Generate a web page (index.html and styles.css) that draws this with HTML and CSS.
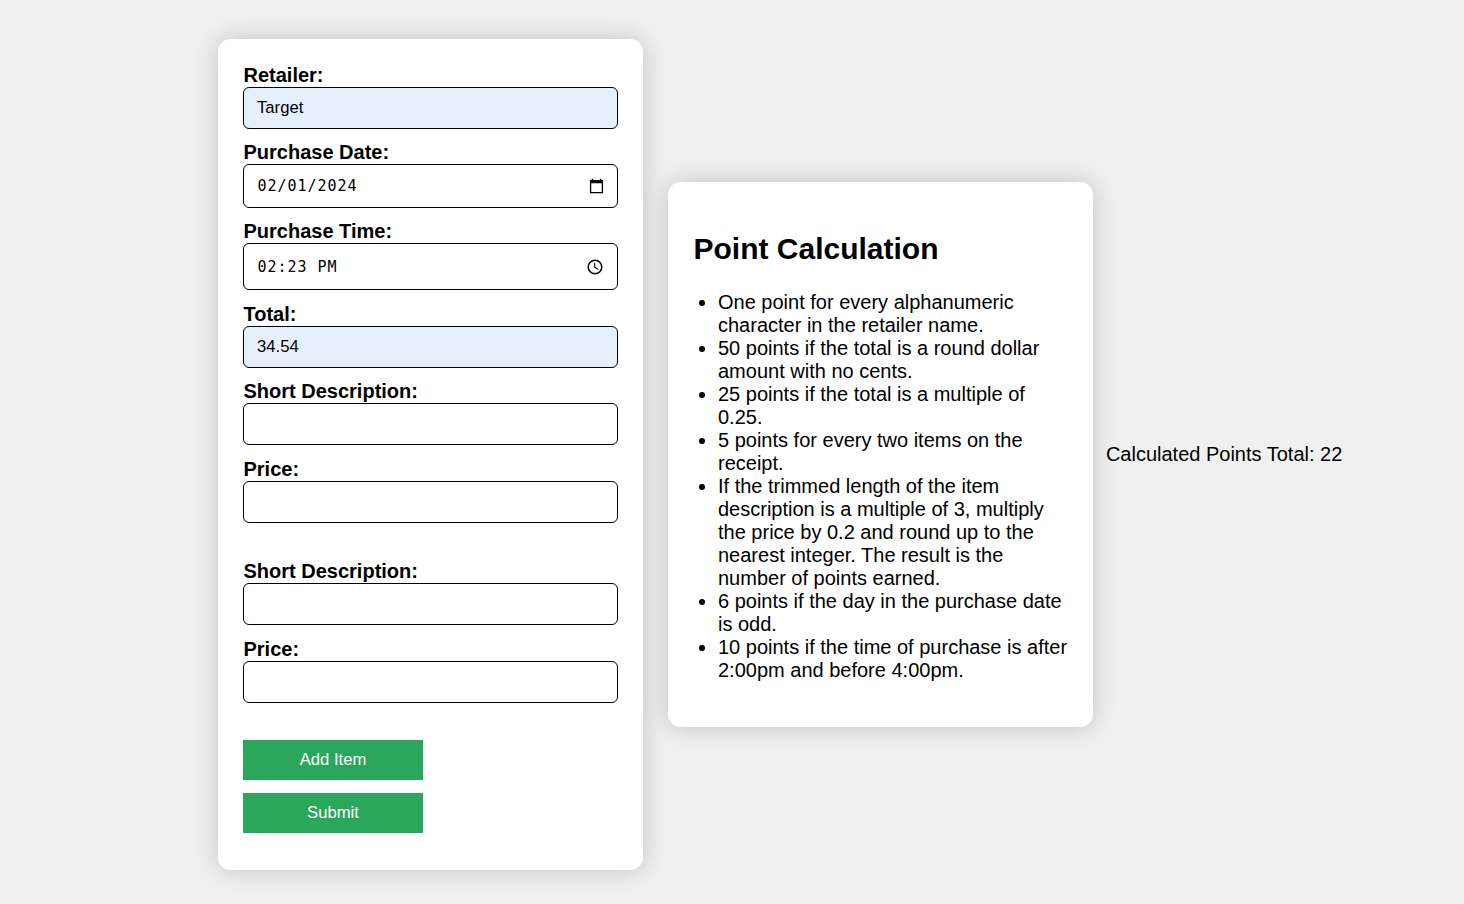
FILE: index.html
```html
<!DOCTYPE html>
<html lang="en">
<head>
<meta charset="utf-8">
<title>Receipt Points</title>
<link rel="stylesheet" href="styles.css">
</head>
<body>
<main class="page">
  <form class="card receipt">
    <label class="field">Retailer:<input class="control filled" type="text" value="Target"></label>
    <label class="field">Purchase Date:
      <span class="control picker date"><span>02/01/2024</span>
        <svg width="17" height="17" viewBox="0 0 17 17"><path d="M2.6 3.2h11.8v11.4H2.6z" fill="none" stroke="#000" stroke-width="1.3"/><path d="M2 2h13v3.3H2zM3.7.7h1.4v2H3.7zM11.9.7h1.4v2h-1.4z"/></svg>
      </span>
    </label>
    <label class="field roomy">Purchase Time:
      <span class="control picker time"><span>02:23 PM</span>
        <svg width="17" height="17" viewBox="0 0 17 17"><circle cx="9" cy="9" r="6.8" fill="none" stroke="#000" stroke-width="1.5"/><path d="M8.7 5v4.3l3.9 2.3" fill="none" stroke="#000" stroke-width="1.1"/></svg>
      </span>
    </label>
    <label class="field">Total:<input class="control filled" type="text" value="34.54"></label>
    <div class="item">
      <label class="field roomy">Short Description:<input class="control" type="text"></label>
      <label class="field last">Price:<input class="control" type="text"></label>
    </div>
    <div class="item">
      <label class="field roomy">Short Description:<input class="control" type="text"></label>
      <label class="field last">Price:<input class="control" type="text"></label>
    </div>
    <button class="action" type="button">Add Item</button>
    <button class="action" type="button">Submit</button>
  </form>
  <section class="card rules">
    <h2>Point Calculation</h2>
    <ul>
      <li>One point for every alphanumeric character in the retailer name.</li>
      <li>50 points if the total is a round dollar amount with no cents.</li>
      <li>25 points if the total is a multiple of 0.25.</li>
      <li>5 points for every two items on the receipt.</li>
      <li>If the trimmed length of the item description is a multiple of 3, multiply the price by 0.2 and round up to the nearest integer. The result is the number of points earned.</li>
      <li>6 points if the day in the purchase date is odd.</li>
      <li>10 points if the time of purchase is after 2:00pm and before 4:00pm.</li>
    </ul>
  </section>
  <div class="result">Calculated Points Total: 22</div>
</main>
</body>
</html>
```
FILE: styles.css
```css
* { box-sizing: border-box; }
body {
  margin: 0;
  background: #f0f0f0;
  color: #000;
  font: 20px/23px "Liberation Sans", Arial, sans-serif;
}
.page {
  display: flex;
  align-items: center;
  height: 904px;
  padding: 5px 0 0 218px;
}
.card {
  width: 425px;
  padding: 25px;
  border-radius: 12.5px;
  background: #fff;
  box-shadow: 0 0 25px rgba(0, 0, 0, .2);
}
.receipt { height: 831px; }
.field {
  display: block;
  margin-bottom: 12px;
  font-weight: bold;
  text-indent: .5px;
}
.field.roomy { margin-bottom: 13px; }
.field.last { margin-bottom: 37px; }
.control {
  display: block;
  width: 375px;
  height: 42px;
  margin: 0;
  padding: 0 13px;
  border: 1px solid #000;
  border-radius: 6px;
  background: #fff;
  color: #000;
  font: 16.67px/20px "Liberation Sans", Arial, sans-serif;
  outline: none;
}
.filled { background: #e6f0fd; }
.picker {
  display: flex;
  align-items: center;
  justify-content: space-between;
  padding: 0 12px 0 13px;
  font-family: "DejaVu Sans Mono", monospace;
  font-size: 15px;
  letter-spacing: .97px;
}
.date { height: 44px; }
.time { height: 47px; padding-right: 14px; }
.action {
  display: block;
  width: 180px;
  height: 40px;
  margin: 0 0 13px;
  padding: 0;
  border: 0;
  background: #2ba75c;
  color: #fff;
  font: 16.67px/20px "Liberation Sans", Arial, sans-serif;
}
.rules {
  height: 545px;
  margin-left: 25px;
}
.rules h2 {
  margin: 25px 0;
  font-size: 30px;
  line-height: 34px;
  text-indent: .5px;
}
.rules ul {
  margin: 0;
  padding-left: 25px;
}
.result {
  margin-left: 12.9px;
  white-space: nowrap;
}
```
